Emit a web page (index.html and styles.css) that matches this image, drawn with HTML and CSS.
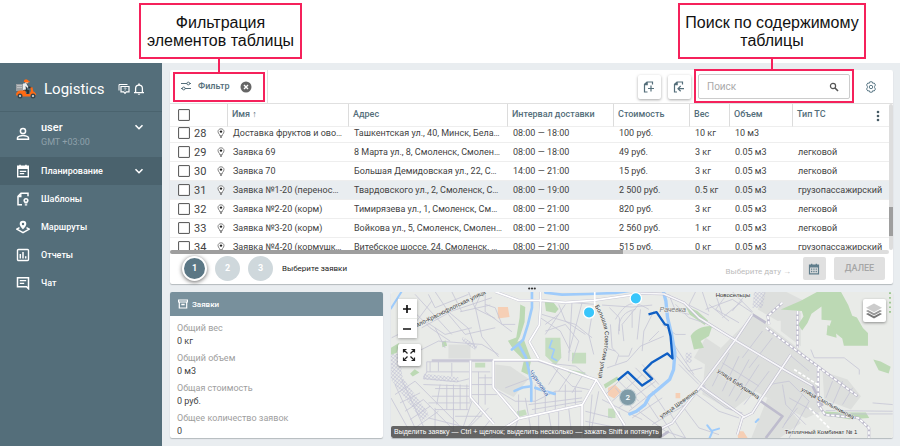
FILE: index.html
```html
<!DOCTYPE html>
<html lang="ru">
<head>
    <meta charset="UTF-8">
    <meta name="viewport" content="width=device-width, initial-scale=1.0">
    <title>Logistics</title>
    <link rel="stylesheet" href="styles.css">
</head>
<body>
    <!-- Icons used more than once -->
    <svg class="defs" aria-hidden="true">
        <symbol id="chevron" viewBox="0 0 10 10"><path d="M1.500 3.200 5 6.700 8.500 3.200" fill="none" stroke="currentColor" stroke-width="1.600"/></symbol>
        <symbol id="pin" viewBox="0 0 8 10"><path d="M4 .8C2.300.8 1 2 1 3.600c0 1.200.7 1.900 1.300 2.700.3.400.4.900.4 1.400h2.600c0-.5.1-1 .4-1.400C6.300 5.500 7 4.800 7 3.600 7 2 5.700.8 4 .8z" fill="#fff" stroke="#666" stroke-width=".8"/><circle cx="4" cy="3.600" r="1.200" fill="#222"/><path d="M3 9h2" stroke="#333"/></symbol>
    </svg>

    <header class="notes">
        <div class="note">Фильтрация<br>элементов таблицы</div>
        <div class="note note-wide">Поиск по содержимому<br>таблицы</div>
    </header>

    <div class="app">
        <aside class="sidebar">
            <div class="brand">
                <svg class="logo" viewBox="0 0 22 20">
                    <path d="M1 5h7v7H1z" fill="#9a9fa3"/><path d="M2 6.500h5M2 8.500h5" stroke="#c5c9cb" stroke-width=".8"/>
                    <path d="M8 4.500 11 4l3 3.500 2.500.500-.3 1.500-3.700-.5-1-1 .5 2.500 2.500 1-1 4-2-.3.500-2.500L8 11.500z" fill="#263238"/>
                    <path d="M8 4.500 11 4l2.500 4-1 1-2-2 .5 3.500-3 .5z" fill="#e8ecee"/>
                    <circle cx="11.800" cy="2.700" r="1.800" fill="#f3b18a"/><path d="M8.800 3C8.800.8 10.300.2 11.600.4c1.300.2 1.900 1.100 1.900 1.800l1.500.4-.2.700z" fill="#ff6a13"/>
                    <path d="M1 16c0-3 2-4.500 4.500-4.500h4.700l1 3.500h3.300l1.500-3.200-.7-3.300 2.200-.3.800 4.300c1.700.6 2.900 2 3 3.800l-4-.5-1.800 1.600H3z" fill="#ff6a13"/>
                    <circle cx="5" cy="17" r="2.500" fill="#37474f"/><circle cx="5" cy="17" r="1" fill="#dfe5e8"/>
                    <circle cx="18" cy="17" r="2.500" fill="#37474f"/><circle cx="18" cy="17" r="1" fill="#dfe5e8"/>
                </svg>
                <span class="brand-name">Logistics</span>
                <button class="bare" aria-label="Сообщения">
                    <svg class="icon-12" viewBox="0 0 12 12" fill="none" stroke="#fff"><path d="M1 7.500V1.500h8.500"/><path d="M3 3.500h8v5.300H8.300L7 10.300 5.700 8.800H3z" stroke-width="1.200"/><path d="M6.200 5.500c0-1 1.700-1 1.700 0 0 .7-.9.600-.9 1.300M7 7.300v.6" stroke-width=".8"/></svg>
                </button>
                <button class="bare" aria-label="Уведомления">
                    <svg class="icon-12" viewBox="0 0 12 12"><path d="M1 9.700h10M2.600 9.500V5.500C2.600 3.400 4 2.200 6 2.200s3.400 1.200 3.400 3.300v4" fill="none" stroke="#fff" stroke-width="1.300"/><path d="M5.200.5h1.600v1.500H5.200zM4.800 10.700h2.400c0 1.500-2.400 1.500-2.400 0z" fill="#fff"/></svg>
                </button>
            </div>
            <div class="user">
                <svg class="icon-14" viewBox="0 0 14 14" fill="none" stroke="#fff" stroke-width="1.500"><circle cx="7" cy="4" r="2.600"/><path d="M1.500 12.300v-1.500C1.500 9.300 5 8.500 7 8.500s5.500.8 5.500 2.300v1.500z"/></svg>
                <div class="user-text">
                    <div class="user-name">user</div>
                    <div class="user-zone">GMT +03:00</div>
                </div>
                <button class="bare" aria-label="Меню пользователя"><svg class="icon-10"><use href="#chevron"/></svg></button>
            </div>
            <nav class="nav">
                <a class="nav-item active" href="#">
                    <svg class="icon-14" viewBox="0 0 14 14"><path d="M1.700 2.300h10.600v10.400H1.700z" fill="none" stroke="#fff" stroke-width="1.400"/><path d="M1.500 2.500h11v2.500h-11zM3.300.7h1.500v2H3.300zM9.200.7h1.500v2H9.200z" fill="#fff"/><path d="M3.800 7.300h6.400M3.800 9.700h4.400" stroke="#fff" stroke-width="1.200"/></svg>
                    <span>Планирование</span>
                    <svg class="icon-10"><use href="#chevron"/></svg>
                </a>
                <a class="nav-item" href="#">
                    <svg class="icon-14" viewBox="0 0 14 14"><path d="M6 12.700H2V4.300L5 1.300h7v3" fill="none" stroke="#fff" stroke-width="1.500"/><path d="M1.500 5.300h4v-4z" fill="#fff"/><path d="M10 6a2.600 2.600 0 0 0-2.600 2.600c0 1.200.8 1.600 1.300 2.900h2.600c.5-1.300 1.300-1.700 1.300-2.900A2.600 2.600 0 0 0 10 6zM8.800 12.200h2.400v1.300H8.800z" fill="#fff"/><circle cx="10" cy="8.600" r="1" fill="#546e7a"/></svg>
                    <span>Шаблоны</span>
                </a>
                <a class="nav-item" href="#">
                    <svg class="icon-14" viewBox="0 0 14 14"><path d="M7 .7a3.300 3.300 0 0 0-3.300 3.300C3.700 6.200 7 9.300 7 9.300S10.300 6.200 10.300 4A3.300 3.300 0 0 0 7 .7z" fill="#fff"/><circle cx="7" cy="4" r="1.200" fill="#546e7a"/><path d="M3.500 7.700.8 9.200 7 12.700l6.200-3.500-2.700-1.500" fill="none" stroke="#fff" stroke-width="1.500"/></svg>
                    <span>Маршруты</span>
                </a>
                <a class="nav-item" href="#">
                    <svg class="icon-14" viewBox="0 0 14 14" fill="none" stroke="#fff"><rect x="1.500" y="1.500" width="11" height="11" rx="1" stroke-width="1.400"/><path d="M4.300 6v4.500M7 4v6.500M9.700 8.300v2.200" stroke-width="1.500"/></svg>
                    <span>Отчеты</span>
                </a>
                <a class="nav-item" href="#">
                    <svg class="icon-14" viewBox="0 0 14 14" fill="none" stroke="#fff"><path d="M1.500 1.700h11v11l-2-2h-9z" stroke-width="1.500"/><path d="M3.800 4.700h6.400M3.800 7.300h4.400" stroke-width="1.200"/></svg>
                    <span>Чат</span>
                </a>
            </nav>
        </aside>

        <main class="main">
            <section class="card orders">
                <div class="toolbar">
                    <div class="filter">
                        <button class="bare filter-button">
                            <svg class="icon-12" viewBox="0 0 12 12" fill="none" stroke="#546e7a"><path d="M1 3.500h6M9.500 3.500H11M1 8.500h1.500M5 8.500h6"/><circle cx="8.300" cy="3.500" r="1.400"/><circle cx="3.700" cy="8.500" r="1.400"/></svg>
                            <span>Фильтр</span>
                        </button>
                        <button class="bare" aria-label="Сбросить фильтр"><svg class="icon-12" viewBox="0 0 12 12"><circle cx="6" cy="6" r="5.500" fill="#666"/><path d="m4 4 4 4M8 4 4 8" stroke="#fff" stroke-width="1.400"/></svg></button>
                    </div>
                    <div class="tools">
                        <button class="tool" aria-label="Добавить заявку"><svg class="icon-14" viewBox="0 0 14 14" fill="none" stroke="#546e7a" stroke-width="1.200"><path d="M5.500 12H2.500V4.300L5 2h5.500v2.500M2.500 4.600h2.700V2"/><path d="M9 5.500v6M6 8.500h6"/></svg></button>
                        <button class="tool" aria-label="Импорт заявок"><svg class="icon-14" viewBox="0 0 14 14" fill="none" stroke="#546e7a" stroke-width="1.200"><path d="M5 12H2.500V4.300L5 2h5.500v2.500M2.500 4.600h2.700V2"/><path d="M12 8.700H6.300M8.700 6 6 8.700l2.700 2.600"/></svg></button>
                        <div class="search">
                            <input class="search-input" type="text" placeholder="Поиск" aria-label="Поиск">
                            <svg class="icon-10 search-icon" viewBox="0 0 10 10" fill="none" stroke="#555"><circle cx="4" cy="4" r="2.600" stroke-width="1.200"/><path d="m6 6 3 3" stroke-width="1.600"/></svg>
                        </div>
                        <button class="bare settings" aria-label="Настройки"><svg class="icon-12" viewBox="0 0 12 12" fill="none" stroke="#607d8b"><path d="M4.800.8h2.400l.5 1.500 1.500-.3 1.300 2-.9 1.200v1.600l.9 1.200-1.300 2-1.500-.3-.5 1.500H4.800l-.5-1.500-1.500.3-1.300-2 .9-1.200V5.200L1.500 4l1.300-2 1.500.3z"/><circle cx="6" cy="6" r="1.700"/></svg></button>
                    </div>
                </div>

                <div class="table-area">
                    <div class="table-scroll" id="tableScroll">
                        <table class="table">
                            <colgroup>
                                <col class="col-pick"><col class="col-name"><col class="col-address"><col class="col-time"><col class="col-cost"><col class="col-weight"><col class="col-volume"><col>
                            </colgroup>
                            <thead>
                                <tr><th><input class="check" type="checkbox" aria-label="Выбрать все"></th><th>Имя ↑</th><th>Адрес</th><th>Интервал доставки</th><th>Стоимость</th><th>Вес</th><th>Объем</th><th>Тип ТС</th></tr>
                            </thead>
                            <tbody>
                                <tr><td><label class="pick"><input class="check" type="checkbox"><span>28</span><svg class="pin"><use href="#pin"/></svg></label></td><td>Доставка фруктов и овощей</td><td>Ташкентская ул., 40, Минск, Беларусь</td><td>08:00 — 18:00</td><td>100 руб.</td><td>10 кг</td><td>10 м3</td><td></td></tr>
                                <tr><td><label class="pick"><input class="check" type="checkbox"><span>29</span><svg class="pin"><use href="#pin"/></svg></label></td><td>Заявка 69</td><td>8 Марта ул., 8, Смоленск, Смоленская обл.</td><td>08:00 — 18:00</td><td>49 руб.</td><td>3 кг</td><td>0.05 м3</td><td>легковой</td></tr>
                                <tr><td><label class="pick"><input class="check" type="checkbox"><span>30</span><svg class="pin"><use href="#pin"/></svg></label></td><td>Заявка 70</td><td>Большая Демидовская ул., 22, Смоленск</td><td>14:00 — 21:00</td><td>15 руб.</td><td>3 кг</td><td>0.05 м3</td><td>легковой</td></tr>
                                <tr class="hovered"><td><label class="pick"><input class="check" type="checkbox"><span>31</span><svg class="pin"><use href="#pin"/></svg></label></td><td>Заявка №1-20 (переноска)</td><td>Твардовского ул., 2, Смоленск, Смоленская обл.</td><td>08:00 — 19:00</td><td>2 500 руб.</td><td>0.5 кг</td><td>0.05 м3</td><td>грузопассажирский</td></tr>
                                <tr><td><label class="pick"><input class="check" type="checkbox"><span>32</span><svg class="pin"><use href="#pin"/></svg></label></td><td>Заявка №2-20 (корм)</td><td>Тимирязева ул., 1, Смоленск, Смоленская обл.</td><td>08:00 — 21:00</td><td>820 руб.</td><td>3 кг</td><td>0.05 м3</td><td>легковой</td></tr>
                                <tr><td><label class="pick"><input class="check" type="checkbox"><span>33</span><svg class="pin"><use href="#pin"/></svg></label></td><td>Заявка №3-20 (корм)</td><td>Войкова ул., 5, Смоленск, Смоленская обл.</td><td>08:00 — 21:00</td><td>2 560 руб.</td><td>1 кг</td><td>0.05 м3</td><td>легковой</td></tr>
                                <tr><td><label class="pick"><input class="check" type="checkbox"><span>34</span><svg class="pin"><use href="#pin"/></svg></label></td><td>Заявка №4-20 (кормушка)</td><td>Витебское шоссе, 24, Смоленск, Смоленская обл.</td><td>08:00 — 21:00</td><td>515 руб.</td><td>0 кг</td><td>0.05 м3</td><td>грузопассажирский</td></tr>
                            </tbody>
                        </table>
                    </div>
                    <button class="bare table-menu" aria-label="Столбцы"><svg class="dots" viewBox="0 0 4 12" fill="#455a64"><circle cx="2" cy="2" r="1.300"/><circle cx="2" cy="6" r="1.300"/><circle cx="2" cy="10" r="1.300"/></svg></button>
                    <div class="bar-y"></div>
                    <div class="bar-x"></div>
                </div>

                <div class="steps">
                    <span class="step current">1</span>
                    <span class="step">2</span>
                    <span class="step">3</span>
                    <span class="step-title">Выберите заявки</span>
                    <span class="date-hint">Выберите дату →</span>
                    <button class="flat flat-date" aria-label="Дата"><svg class="icon-12" viewBox="0 0 12 12"><path d="M1.500 2.200h9v8.600h-9z" fill="none" stroke="#607d8b" stroke-width="1.200"/><path d="M1.500 2h9v2.500h-9zM3 .7h1.300V2H3zM7.700.7H9V2H7.700z" fill="#607d8b"/><path d="M3 6.200h6M3 8.500h6" stroke="#607d8b" stroke-width="1.300" stroke-dasharray="1.300 1"/></svg></button>
                    <button class="flat flat-next" disabled>ДАЛЕЕ</button>
                </div>
            </section>

            <div class="splitter"><svg class="grip" viewBox="0 0 8 3" fill="#333"><circle cx="1.200" cy="1.500" r="1.100"/><circle cx="4" cy="1.500" r="1.100"/><circle cx="6.800" cy="1.500" r="1.100"/></svg></div>

            <div class="bottom">
                <section class="card summary">
                    <h2 class="summary-title">
                        <svg class="icon-10" viewBox="0 0 10 10" fill="none" stroke="#fff"><path d="M.6 1h8.800v2H.6zM1.300 3v6h7.400V3" stroke-width="1.200"/><path d="M3.300 5.500h3.400" stroke-width="1.300"/></svg>
                        Заявки
                    </h2>
                    <dl class="totals">
                        <dt>Общий вес</dt><dd>0 кг</dd>
                        <dt>Общий объем</dt><dd>0 м3</dd>
                        <dt>Общая стоимость</dt><dd>0 руб.</dd>
                        <dt>Общее количество заявок</dt><dd>0</dd>
                    </dl>
                </section>

                <section class="card map">
                    <svg class="map-canvas" viewBox="18 21 1503 441" preserveAspectRatio="xMidYMid slice">
                        <defs>
                            <pattern id="hatch" width="8" height="8" patternUnits="userSpaceOnUse" patternTransform="rotate(40)"><path d="M0 0h8M0 0v8" stroke="#b9b9d2" stroke-width="2.500"/></pattern>
                            <path id="sovetskaya" d="M628 66C650 100 664 140 656 190C650 224 642 250 638 290"/>
                        </defs>
                        <path d="M0 0h1540v480H0z" fill="#e9ebe8"/>

                        <!-- Built-up and industrial areas -->
                        <g fill="#dddfdd">
                            <path d="M190 180h66v42h-66zM330 240l45 5 55 38-45 54-55-27zM1105 90l130 100 62 66 8 125-45 20-150-80-72 58-88-50 8-90z"/>
                            <path d="M1136 20l60 0 60 30-20 50-60 10-60-35zM1185 85h60v100l-60-45zM1310 260l75 25 40 50-30 40-80-30zM1145 340l60 25 40 50-70 50-80 0z"/>
                            <path d="M960 160l45 30-30 60-50-30z"/>
                        </g>
                        <g fill="url(#hatch)">
                            <path d="M18 205l25 5 10 70 80 110-20 20-95-125zM115 268l105 10 0 15-105-8zM232 158l45 25-5 14-42-28zM1105 20h35l-10 50-30 0zM900 205h18v30h-18z"/>
                        </g>

                        <!-- Greens -->
                        <g fill="#bcd9b4">
                            <path d="M405 60l15 8-2 45-14 44-8 15 20-6 22 60-10 45-20-10 8-34-30-30-18-28 25-10 10-60zM478 50l20-4 22 28-10 12-28-6zM18 190l25-15-8 30-17 6zM75 268l14-14 14 10-20 12zM170 172l12-4 4 16-14 4zM655 300l40-24 5 8-40 28z"/>
                            <path d="M1185 75l60-26 50-27h70l22 40 12 32 14 5 18 32 15 15 0 38-72 0-5-22-40-32 8-22-30-2 0-40-30 22-12 28-16 22-12-18 16-24-5-16z"/>
                            <path d="M1325 122l24 12 3 26-30-8zM900 65l35 15 32 28-10 14-45-32zM915 155c10-20 40-32 65-30l-10 30-25 15 10 20-30 5zM1462 225l22 6 30 16-6 20-30-10zM1310 380l55 4 75 0 10 16-60 4-60-10z"/>
                            <path d="M270 235h30v14h-30zM560 205h42v32h-42zM480 160l45 0 3 60-18 22-30-28zM550 254l50 10-2 12-50-12zM395 380l25-5 5 15-28 8zM668 372h22v28h-22z" opacity=".8"/>
                        </g>
                        <path d="M1512 24v68" stroke="#8fc184" stroke-width="5" stroke-dasharray="5 9"/>
                        <g fill="#f6cfb5"><path d="M338 68l30 0 5 30-35 4zM668 310l20-10 20 20-22 22-18-10zM1055 440l18 0 14 22h-30zM870 325h14v16h-14z"/></g>

                        <!-- Minor streets -->
                        <g fill="none" stroke="#c7c6d6" stroke-width="2.500">
                            <path d="M60 55l75 75 60 40M90 30l110 120M150 22l40 60 60 50 20 60M200 22l30 60M250 22l20 50 60 30M60 150l60-40 60 40 80-20M110 130l90-50 120-40M20 160l60-30 60-80M290 22l-20 45 20 90 50 60M300 60l30 10 20 50 40 0M300 22v60l80 60M190 90l50 60 90-20M225 82l90-20M150 130l30 60M100 200l60-30 130 10 50 30M130 30l20 40 100-40"/>
                            <path d="M125 232h130M125 232v30h190M135 262v-30M160 232v28M200 235v40M255 232v120M125 262l-10 20 100 10 40-10M280 280h45M280 262v110M300 270v90M255 300h70M255 330h80M115 300l140 5M150 312l105 0M165 300l-10 60M185 300v75M205 300v75M225 300v75M245 300v75M140 335h115M130 355h125M150 375h100"/>
                            <path d="M30 300l60 130M50 285l65 140M30 330l60-40 130 130M45 355l60-30M60 380l55-35M75 405l60-40M90 430l70-50M115 345l90 90M150 370v80M205 370v70M18 340l50 90M130 400l120 30 60-60M210 395l80 0M260 350l-30 90M290 375l-60 75M320 400l-40 50M340 440l60-40"/>
                            <path d="M340 320l50 30 60 0 60-30 80 0M400 400l-20 60M430 395l10 60M460 390l0 70M490 385l10 60M520 380l0 60M550 370l10 90M360 310l80-30 40 30M450 300l0 90M400 330l0 70M420 340l10 55M480 310l0 75M510 320l0 60M540 300l0 75M570 310l0 50M430 360l160-20M440 375l150-25M620 330l-10 120M640 320l-25 130M600 380l80 20M600 410l100 20M605 430l60 30"/>
                            <path d="M465 100l60 40 30 60M470 90l100 30 50 40M520 60l20 50 60 40M540 60l-60 90M560 50l-10 180M590 55l-40 150M480 140l60-20 40 50-20 60M500 50l130 10M480 235l90 10 50 40M500 245l60 60 50 10M520 250l-30 50M560 260l-40 60M590 275l-30 50M620 90l-10 60 15 60M480 120l40-30"/>
                            <path d="M650 62l90 6 60-6M672 70l30 30 0 40M690 105c30-50 50-60 100-30M700 150c-5-50 20-70 50-75M715 170l-5-50 50-60M740 130l0-50M755 165l10-90M770 200l5-60 30-60M675 120l5 70 20 20-10 30M665 250l60-20 40-45 70-30M700 215l30 0 10-25M790 170l30-30M660 190l30 10M830 120l40 30 30 0M850 30l20 50 40 10"/>
                            <path d="M700 290l60 60M690 310l50 60M720 275l70 70M750 250l60 60M770 240l50 60M660 330l60-60M680 350l90-80M700 370l110-80M730 380l100-80M650 345l120 60M700 380l20 70M740 400l90-60M780 345l40 60M800 320l40 60M760 380l80 60 60 20M830 400l40 60M850 380l50 80M880 350l60 80 60 20M920 320l80 60 60 20M940 310l80 60 50 15M800 420l100-60 60-60M870 60l40 40 60 20M880 240l60 60M900 250l60 60M860 200l50 60 40-10M865 180l60 90"/>
                            <path d="M930 22l-20 40 60 30M950 22l20 60M990 30l20 60M1020 35l-30 40 70 40M1040 22l60 60M960 75l80-30 60 40M1010 100l60-50M1040 80l40-50M970 60l60 50M1030 205l-50 100M1060 215l-50 105M1090 225l-60 110M1120 240l-70 110M1150 260l-75 100M1010 235l110 70M1000 265l100 65M1130 140l-60 80M1160 160l-70 90M1190 300l10 60 60 60M1150 300l60-10 60 60M1210 210l60 50M1250 330l-60 100M1270 350l-60 110M1300 390l-90-50M1340 290l-20 50M1370 290l-30 70M1400 310l-30 50M1195 420l40-50"/>
                            <path d="M1275 195l10 25 90 0 45 35 0 15M1460 355l60 5M1320 378l200 2M1340 388l180 0"/>
                        </g>

                        <!-- Water -->
                        <g fill="none" stroke="#9ecbfb" stroke-linecap="round" stroke-linejoin="round">
                            <path d="M18 72L52 18" stroke-width="6"/>
                            <path d="M440 20v50l-12 50-14 45-14 14 22 40 8 35 8 40 0 55M400 179l-20 16M438 305l-26 4-24 10M450 310l30 10 28 8" stroke-width="8"/>
                            <path d="M480 25l50 6 80-2 80-3 40-6" stroke-width="8"/>
                            <path d="M500 168l-8 22 15 5-8 25 15 8" stroke-width="5"/>
                            <path d="M833 20l8 30 5 50 12 50 10 55-4 50-12 30-35 30-25 20-14 25-25 20-20 8" stroke-width="10"/>
                            <path d="M965 422l15 20-8 18M980 438l20-6M1110 412l8-8" stroke-width="6"/>
                        </g>

                        <!-- Main roads -->
                        <g fill="none" stroke="#bebccd" stroke-width="8" stroke-linejoin="round">
                            <path d="M765 27l70 2 60 26 45 45 110 68 150 90 80 46 30 60"/>
                            <path d="M800 445l60-30 85-110 105-140 50-75M1055 450l15-50 30-15 25-40 90-135M945 305l130 92M1100 90l40 25M1125 350l65 45-50 65M850 440l-30 20"/>
                            <path d="M1140 130l155 115 120 90M1150 120l-4-25 44-40M1235 80v110M1297 250v110l20 30 100 10 32 30v30"/>
                        </g>
                        <g fill="none" stroke="#f7f7f9" stroke-width="5" stroke-linejoin="round">
                            <path d="M765 27l70 2 60 26 45 45 110 68 150 90 80 46"/>
                            <path d="M800 445l60-30 85-110 105-140 50-75M1055 450l15-50 30-15 25-40 90-135M945 305l130 92"/>
                        </g>
                        <g fill="none" stroke="#fff" stroke-width="5" stroke-dasharray="10 5">
                            <path d="M1140 130l155 115 120 90M1150 120l-4-25 44-40M1235 80v110M1297 250v110l20 30 100 10 32 30v30M1225 255l70 45M1270 370l60 60"/>
                        </g>
                        <g fill="none" stroke="#c9c8d6" stroke-width="8" stroke-linejoin="round">
                            <path d="M330 22l70 26 60 0 80 6 85-6 140-20M466 22v40l-4 60-30 50 28 50M324 228l134 0 175 58-42 74-190 42-90 58M324 228v80l78 92M633 286l85 136M256 228v110l70 80M140 228h184M590 360v100"/>
                        </g>
                        <g fill="none" stroke="#fff" stroke-width="5" stroke-linejoin="round">
                            <path d="M330 22l70 26 60 0 80 6 85-6 140-20M466 22v40l-4 60-30 50 28 50M324 226l134 0 175 60-42 74-190 42-90 58M324 228v80l78 92M633 286l85 136M628 22l0 50M256 228v110l70 80M590 360v100"/>
                        </g>

                        <!-- Labels -->
                        <g class="map-label">
                            <text x="96" y="128" transform="rotate(-26 96 128)">ало-Краснофлотская улица</text>
                            <text><textPath href="#sovetskaya">Большая Советская улица</textPath></text>
                            <text class="stream" x="432" y="262" transform="rotate(56 432 262)">Чуриловка</text>
                            <text x="990" y="38">Новосельцы</text>
                            <text class="river" x="822" y="84">Рачевка</text>
                            <text x="994" y="262" transform="rotate(34 994 262)">улица Бабушкина</text>
                            <text x="828" y="402" transform="rotate(-36 828 402)">улица Шевченко</text>
                            <text x="1245" y="318" transform="rotate(29 1245 318)">улица Смольянинова</text>
                            <text x="1197" y="449">Тепличный Комбинат № 1</text>
                        </g>

                        <!-- Route and order markers -->
                        <path d="M697 287l30-25 43 41 30-20-25-25 23-23 47-28 16 15-6-67-8-33-9-2-25-37-24 7" fill="none" stroke="#0f5fc4" stroke-width="7" stroke-linejoin="round"/>
                        <g fill="#38c6fb" stroke="#fff" stroke-width="4"><circle cx="611" cy="84" r="17"/><circle cx="751" cy="42" r="17"/></g>
                        <circle cx="727" cy="338" r="25" fill="#7f9ba7" stroke="#c5d1d6" stroke-width="3"/>
                        <text class="cluster" x="727" y="347">2</text>
                    </svg>
                    <div class="zoom">
                        <button class="zoom-button" aria-label="Приблизить"><svg class="icon-10" viewBox="0 0 10 10"><path d="M5 1v8M1 5h8" stroke="#111" stroke-width="1.700"/></svg></button>
                        <button class="zoom-button" aria-label="Отдалить"><svg class="icon-10" viewBox="0 0 10 10"><path d="M1 5h8" stroke="#111" stroke-width="1.700"/></svg></button>
                    </div>
                    <button class="map-button fit" aria-label="Показать все"><svg class="icon-14" viewBox="0 0 14 14" fill="none" stroke="#222" stroke-width="1.200"><path d="M1.500 4.500v-3h3M9.500 1.500h3v3M12.500 9.500v3h-3M4.500 12.500h-3v-3M1.500 1.500l4 4M12.500 1.500l-4 4M12.500 12.500l-4-4M1.500 12.500l4-4"/></svg></button>
                    <button class="map-button layers" aria-label="Слои"><svg class="icon-18" viewBox="0 0 18 18"><path d="m1 12 8 4.500 8-4.500-2-1-6 3.300-6-3.300z" fill="#777"/><path d="m1 9 8 4.500L17 9l-2-1-6 3.300L3 8z" fill="#999"/><path d="m1 5.800 8-4.300 8 4.300-8 4.500z" fill="#ccc"/></svg></button>
                    <div class="map-tip">Выделить заявку — Ctrl + щелчок; выделить несколько — зажать Shift и потянуть</div>
                </section>
            </div>
        </main>
    </div>

    <script>
        document.getElementById('tableScroll').scrollTop = 3;
    </script>
</body>
</html>
```

FILE: styles.css
```css
* {
    box-sizing: border-box;
}
body {
    margin: 0;
    min-height: 100vh;
    display: flex;
    flex-direction: column;
    background: #fff;
    color: #424242;
    font: 9px/13px Roboto, "Open Sans", sans-serif;
}
svg {
    display: block;
    flex: none;
}
button, input {
    font: inherit;
    color: inherit;
}
.defs {
    position: absolute;
    width: 0;
    height: 0;
}
.icon-10 { width: 10px; height: 10px; }
.icon-12 { width: 12px; height: 12px; }
.icon-14 { width: 14px; height: 14px; }
.icon-18 { width: 18px; height: 18px; }
.bare {
    padding: 0;
    border: 0;
    background: none;
    cursor: pointer;
}

/* Notes above the app */
.notes {
    display: flex;
    justify-content: space-between;
    height: 63px;
    padding: 3px 34px 4px 139px;
}
.note {
    width: 163px;
    padding-top: 9px;
    border: 2px solid #f5215b;
    color: #111;
    font: 16px/18px "Liberation Sans", Arial, sans-serif;
    text-align: center;
    white-space: nowrap;
}
.note-wide {
    width: 188px;
}

/* Sidebar */
.app {
    flex: 1;
    display: flex;
}
.sidebar {
    flex: none;
    width: 162px;
    background: #546e7a;
    color: #fff;
}
.brand {
    display: flex;
    align-items: center;
    gap: 3px;
    height: 49px;
    padding: 4px 17px 0 15px;
    border-bottom: 1px solid #4a636e;
}
.logo {
    width: 22px;
    height: 20px;
}
.brand-name {
    flex: 1;
    padding-left: 4px;
    font-size: 15px;
    line-height: 20px;
}
.user {
    display: flex;
    height: 45px;
    padding: 9px 18px 0 16px;
}
.user .icon-14 {
    margin-top: 6px;
}
.user-text {
    flex: 1;
    padding-left: 11px;
}
.user-name {
    font-size: 11px;
    font-weight: 500;
    line-height: 14px;
}
.user-zone {
    line-height: 15px;
    color: #8fa1aa;
}
.user .bare {
    height: 12px;
}
.nav-item {
    display: flex;
    align-items: center;
    gap: 11px;
    height: 28px;
    padding: 0 18px 0 16px;
    color: #fff;
    font-weight: 500;
    text-decoration: none;
}
.nav-item span {
    flex: 1;
}
.active {
    background: #4a626d;
}

/* Main area */
.main {
    flex: 1;
    min-width: 0;
    display: flex;
    flex-direction: column;
    padding: 7px 7px 8px 8px;
    background: #e9edf0;
}
.card {
    background: #fff;
    border-radius: 2px;
    box-shadow: 0 1px 1px #b4babd;
}
.toolbar {
    display: flex;
    justify-content: space-between;
    height: 34px;
    border-bottom: 1px solid #e0e0e0;
}
.filter {
    position: relative;
    display: flex;
    align-items: center;
    gap: 10px;
    width: 98px;
    padding-left: 10px;
    border-right: 1px solid #e0e0e0;
}
.filter-button {
    display: flex;
    gap: 6px;
    color: #546e7a;
    font-weight: 500;
}
/* Red frames that tie the notes to the controls */
.filter::after,
.search::after {
    content: "";
    position: absolute;
    inset: 2px 2px 1px 3px;
    border: 2px solid #f5215b;
    pointer-events: none;
}
.search::after {
    inset: -5px -4px -4px;
}
.filter::before,
.search::before {
    content: "";
    position: absolute;
    top: -12px;
    left: 48px;
    width: 2px;
    height: 14px;
    background: #f5215b;
}
.search::before {
    top: -17px;
    left: 73px;
}
.tools {
    display: flex;
    align-items: center;
    gap: 7px;
    padding-right: 16px;
}
.tool {
    width: 23px;
    height: 24px;
    padding: 0 4px;
    border: 0;
    border-radius: 2px;
    background: #fff;
    box-shadow: 0 1px 3px rgba(0,0,0,0.35);
}
.search {
    position: relative;
    width: 152px;
}
.search-input {
    display: block;
    width: 100%;
    height: 25px;
    padding: 0 24px 0 8px;
    border: 1px solid #ccc;
    border-radius: 2px;
    background: #fff;
    font-size: 10px;
}
.search-input::placeholder {
    color: #aaa;
}
.search-icon {
    position: absolute;
    top: 8px;
    right: 11px;
}
.settings {
    margin-left: 8px;
}

/* Orders table */
.table-area {
    position: relative;
    padding: 0 4px 4px 0;
}
.table-scroll {
    height: 146px;
    overflow: hidden;
}
.table {
    width: 100%;
    table-layout: fixed;
    border-collapse: separate;
    border-spacing: 0;
}
.col-pick { width: 57px; }
.col-name { width: 121px; }
.col-address { width: 159px; }
.col-time { width: 106px; }
.col-cost { width: 76px; }
.col-weight { width: 40px; }
.col-volume { width: 63px; }
.table th {
    position: sticky;
    top: 0;
    height: 23px;
    padding: 0 0 1px 4px;
    border-left: 1px solid #dcdcdc;
    border-bottom: 1px solid #eee;
    background: #fff;
    color: #546e7a;
    font-weight: 500;
    text-align: left;
    white-space: nowrap;
}
.table td {
    height: 19px;
    padding: 0 5px 0 6px;
    border-bottom: 1px solid #eee;
    overflow: hidden;
    text-overflow: ellipsis;
    white-space: nowrap;
}
.table th:first-child {
    padding: 0 0 0 8px;
    border-left: 0;
}
.table td:first-child {
    padding: 0 0 0 8px;
}
.table td:last-child {
    padding-right: 0;
}
.hovered {
    background: #e9edf0;
}
.check {
    appearance: none;
    display: block;
    width: 12px;
    height: 12px;
    margin: 0;
    border: 1px solid #616161;
    border-radius: 1px;
    background: #fff;
    box-shadow: inset 0 0 1px #616161;
}
.pick {
    display: flex;
    align-items: center;
    font-size: 11px;
}
.pick span {
    width: 27px;
    padding-left: 4px;
}
.pin {
    width: 8px;
    height: 10px;
}
.table-menu {
    position: absolute;
    top: 6px;
    right: 13px;
    background: #fff;
}
.dots {
    width: 4px;
    height: 12px;
}
.bar-y,
.bar-x {
    position: absolute;
    background: linear-gradient(#9e9e9e, #9e9e9e) no-repeat #ddd;
    border-radius: 2px;
}
.bar-y {
    top: 0;
    right: 0;
    bottom: 4px;
    width: 4px;
    background-size: 4px 29px;
    background-position: 0 103px;
}
.bar-x {
    left: 0;
    right: 4px;
    bottom: 0;
    height: 4px;
    background-size: 63% 4px;
}

/* Steps under the table */
.steps {
    display: flex;
    align-items: center;
    gap: 8px;
    height: 30px;
    padding: 0 8px 1px 12px;
    font-size: 8px;
}
.step {
    width: 25px;
    height: 25px;
    border-radius: 50%;
    background: #cfd8dc;
    color: #fff;
    font-size: 9px;
    font-weight: 700;
    line-height: 25px;
    text-align: center;
}
.current {
    border: 2px solid #fff;
    background: #5b7785;
    box-shadow: 0 1px 4px rgba(0,0,0,0.6);
    line-height: 21px;
}
.step-title {
    flex: 1;
    padding-left: 1px;
    color: #222;
}
.date-hint {
    padding: 5px 4px 0 0;
    color: #bdbdbd;
}
.flat {
    height: 23px;
    padding: 0;
    border: 0;
    border-radius: 2px;
    background: #e0e0e0;
}
.flat-date {
    width: 23px;
    padding-left: 5px;
}
.flat-next {
    width: 51px;
    color: #a6a6a6;
    font-size: 9px;
    font-weight: 500;
}
.splitter {
    display: flex;
    align-items: center;
    justify-content: center;
    height: 8px;
}
.grip {
    width: 8px;
    height: 3px;
}

/* Totals and map */
.bottom {
    flex: 1;
    display: grid;
    grid-template-columns: 213px 1fr;
    gap: 8px;
}
.summary {
    overflow: hidden;
}
.summary-title {
    display: flex;
    align-items: center;
    gap: 4px;
    height: 24px;
    margin: 0;
    padding-left: 8px;
    background: #78909c;
    color: #fff;
    font-size: 8px;
    font-weight: 500;
}
.totals {
    margin: 0;
    padding: 6px 7px 0;
}
.totals dt {
    color: #9e9e9e;
}
.totals dd {
    margin: 0 0 4px;
}
.totals dd:last-child {
    margin: 0;
}
.map {
    position: relative;
    overflow: hidden;
}
.map-canvas {
    position: absolute;
    width: 100%;
    height: 100%;
}
.map-label {
    fill: #333;
    font-family: "Liberation Sans", Arial, sans-serif;
    font-size: 18px;
    paint-order: stroke;
    stroke: #eef0ee;
    stroke-width: 3px;
}
.map-label .river {
    fill: #777;
    font-size: 21px;
    font-style: italic;
}
.map-label .stream {
    fill: #3a66b0;
}
.cluster {
    fill: #fff;
    font-size: 24px;
    font-weight: 500;
    text-anchor: middle;
}
.zoom {
    position: absolute;
    top: 7px;
    left: 7px;
    box-shadow: 0 1px 3px rgba(0,0,0,0.3);
}
.zoom-button {
    display: block;
    width: 19px;
    height: 19px;
    padding: 0 4px;
    border: 0;
    background: #fff;
}
.zoom-button + .zoom-button {
    margin-top: 1px;
}
.map-button {
    position: absolute;
    width: 23px;
    height: 22px;
    padding: 0 4px;
    border: 0;
    border-radius: 2px;
    background: #fff;
    box-shadow: 0 1px 3px rgba(0,0,0,0.4);
}
.fit {
    top: 52px;
    left: 7px;
}
.layers {
    top: 7px;
    right: 7px;
    height: 23px;
    padding: 0 2px;
}
.map-tip {
    position: absolute;
    left: 0;
    bottom: 0;
    padding: 0 3px;
    border-radius: 2px;
    background: rgba(66,66,66,0.8);
    color: #fff;
    font: 7px/12px "Liberation Sans", Arial, sans-serif;
    white-space: nowrap;
}
```
